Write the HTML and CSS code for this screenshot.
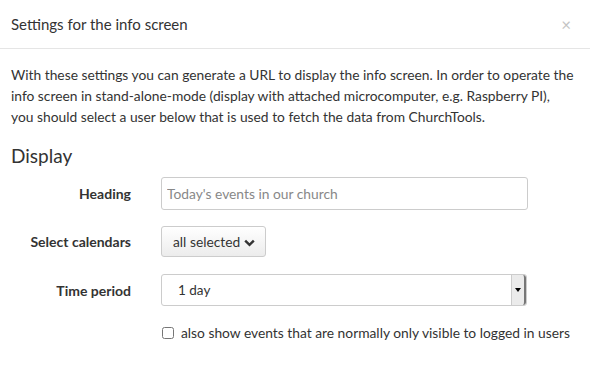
FILE: index.html
```html
<!DOCTYPE html>
<html lang="en">
<head>
  <meta charset="UTF-8">
  <title>Settings for the info screen</title>
  <link rel="stylesheet" href="styles.css">
</head>
<body>
  <div class="modal">
    <div class="modal-header">
      <h4 class="modal-title">Settings for the info screen</h4>
      <span class="close">&times;</span>
    </div>
    <div class="modal-body">
      <p class="intro">With these settings you can generate a URL to display the info screen. In order to operate the info screen in stand-alone-mode (display with attached microcomputer, e.g. Raspberry PI), you should select a user below that is used to fetch the data from ChurchTools.</p>
      <h3 class="section-title">Display</h3>

      <div class="form-row">
        <label class="form-label">Heading</label>
        <input class="form-input" type="text" placeholder="Today's events in our church">
      </div>

      <div class="form-row form-row-wide">
        <label class="form-label">Select calendars</label>
        <div>
          <button class="dropdown-btn">all selected
            <svg width="11" height="8" viewBox="0 0 11 8"><path d="M1.2 1.6 L5.5 5.9 L9.8 1.6" fill="none" stroke="#333" stroke-width="2.4"/></svg>
          </button>
        </div>
      </div>

      <div class="form-row">
        <label class="form-label">Time period</label>
        <div class="select-box">
          <span class="select-value">1 day</span>
          <span class="select-arrow"></span>
        </div>
      </div>

      <div class="check-row">
        <label class="check-label"><input type="checkbox" class="check"> also show events that are normally only visible to logged in users</label>
      </div>
    </div>
  </div>
</body>
</html>
```

FILE: styles.css
```css
body {
  margin: 0;
  font-family: Lato, "Open Sans", sans-serif;
  color: #333;
  background: #fff;
}

.modal {
  width: 590px;
}

.modal-header {
  display: flex;
  justify-content: space-between;
  align-items: center;
  height: 48px;
  padding: 0 11px;
  border-bottom: 1px solid #e5e5e5;
}

.modal-title {
  margin: 0;
  font-size: 15px;
  font-weight: normal;
}

.close {
  color: #c4c4c4;
  font-size: 17px;
  margin-right: 8px;
}

.modal-body {
  padding: 15px 15px 12px 11px;
}

.intro {
  margin: 0;
  font-size: 13.8px;
  line-height: 21px;
}

.section-title {
  margin: 17px 0 10px;
  font-size: 19px;
  font-weight: normal;
}

.form-row {
  display: grid;
  grid-template-columns: 120px 367px;
  column-gap: 30px;
  align-items: center;
  margin-bottom: 16px;
}

.form-row-wide {
  margin-bottom: 17px;
}

.form-label {
  text-align: right;
  font-weight: bold;
  font-size: 14px;
}

.form-input {
  box-sizing: border-box;
  height: 33px;
  padding: 0 5px;
  border: 1px solid #ccc;
  border-radius: 3px;
  font-family: inherit;
  font-size: 13.8px;
}

.form-input::placeholder {
  color: #888;
}

.dropdown-btn {
  height: 31px;
  padding: 0 10px 0 11px;
  border: 1px solid #ccc;
  border-radius: 3px;
  background: linear-gradient(#fff, #ececec);
  font-family: inherit;
  font-size: 13.8px;
  color: #333;
}

.select-box {
  position: relative;
  box-sizing: border-box;
  width: 366px;
  height: 32px;
  display: flex;
  align-items: center;
  border: 1px solid #ccc;
  border-radius: 3px;
}

.select-value {
  padding-left: 16px;
  font-size: 13.5px;
}

.select-arrow {
  position: absolute;
  right: 0;
  top: 0;
  bottom: 0;
  width: 12px;
  background: #ebebeb;
  border-left: 1px solid #ccc;
  border-right: 2px solid #777;
  border-radius: 0 3px 3px 0;
}

.select-arrow::after {
  content: "";
  position: absolute;
  left: 3px;
  top: 13px;
  border-left: 3px solid transparent;
  border-right: 3px solid transparent;
  border-top: 4px solid #000;
}

.check-row {
  padding-left: 150px;
  margin-top: 18px;
}

.check-label {
  display: flex;
  align-items: center;
  font-size: 13.8px;
  white-space: nowrap;
}

.check {
  margin: 0 7px 0 1px;
  width: 12px;
  height: 12px;
}
```
